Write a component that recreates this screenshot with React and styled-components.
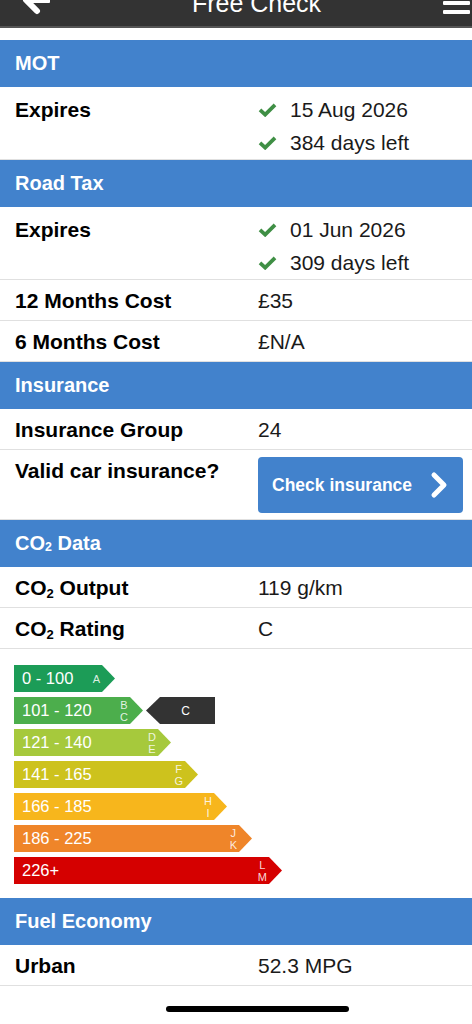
import styled, { createGlobalStyle } from "styled-components";

const GlobalStyle = createGlobalStyle`
  * { box-sizing: border-box; }
  body {
    margin: 0;
    background: #fff;
    font-family: "Liberation Sans", Arial, Helvetica, sans-serif;
    color: #111;
  }
`;

const bands = [
  { range: "0 - 100", letters: ["A"], width: 101, color: "#1c9c57" },
  { range: "101 - 120", letters: ["B", "C"], width: 129, color: "#4cae4c", active: true },
  { range: "121 - 140", letters: ["D", "E"], width: 157, color: "#a6c93c" },
  { range: "141 - 165", letters: ["F", "G"], width: 184, color: "#cdc21d" },
  { range: "166 - 185", letters: ["H", "I"], width: 213, color: "#f7b61c" },
  { range: "186 - 225", letters: ["J", "K"], width: 238, color: "#ef8529" },
  { range: "226+", letters: ["L", "M"], width: 268, color: "#d50000" },
];

const Check = () => (
  <CheckIcon viewBox="0 0 20 16" width="19" height="15">
    <polyline points="2,8.5 7.5,13.5 18,3" fill="none" stroke="#3f8f45" strokeWidth="4" />
  </CheckIcon>
);

const CO2 = () => (
  <>
    CO<Sub>2</Sub>
  </>
);

const App = () => {
  return (
    <>
      <GlobalStyle />
      <Page>
        <TopBar>
          <BackArrow viewBox="0 0 30 34" width="30" height="34">
            <path
              d="M28 17 H8 M17 6 L6 17 L17 28"
              fill="none"
              stroke="#fff"
              strokeWidth="6"
              strokeLinecap="round"
              strokeLinejoin="round"
            />
          </BackArrow>
          <Title>Free Check</Title>
          <Burger>
            <span />
            <span />
            <span />
          </Burger>
        </TopBar>

        <SectionHeader>MOT</SectionHeader>
        <Row $tall>
          <Label>Expires</Label>
          <ValueList>
            <ValueLine>
              <Check />
              15 Aug 2026
            </ValueLine>
            <ValueLine>
              <Check />
              384 days left
            </ValueLine>
          </ValueList>
        </Row>

        <SectionHeader>Road Tax</SectionHeader>
        <Row $tall>
          <Label>Expires</Label>
          <ValueList>
            <ValueLine>
              <Check />
              01 Jun 2026
            </ValueLine>
            <ValueLine>
              <Check />
              309 days left
            </ValueLine>
          </ValueList>
        </Row>
        <Row>
          <Label>12 Months Cost</Label>
          <Value>£35</Value>
        </Row>
        <Row>
          <Label>6 Months Cost</Label>
          <Value>£N/A</Value>
        </Row>

        <SectionHeader>Insurance</SectionHeader>
        <Row>
          <Label>Insurance Group</Label>
          <Value>24</Value>
        </Row>
        <ButtonRow>
          <Label>Valid car insurance?</Label>
          <InsuranceButton>
            Check insurance
            <svg viewBox="0 0 20 28" width="20" height="28">
              <polyline
                points="5,4 15,14 5,24"
                fill="none"
                stroke="#fff"
                strokeWidth="5"
                strokeLinecap="round"
                strokeLinejoin="round"
              />
            </svg>
          </InsuranceButton>
        </ButtonRow>

        <SectionHeader>
          <CO2 /> Data
        </SectionHeader>
        <Row>
          <Label>
            <CO2 /> Output
          </Label>
          <Value>119 g/km</Value>
        </Row>
        <Row>
          <Label>
            <CO2 /> Rating
          </Label>
          <Value>C</Value>
        </Row>

        <Chart>
          {bands.map((b) => (
            <BandRow key={b.range}>
              <Band $color={b.color} style={{ width: b.width }}>
                <BandRange>{b.range}</BandRange>
                <BandLetters>
                  {b.letters.map((l) => (
                    <span key={l}>{l}</span>
                  ))}
                </BandLetters>
              </Band>
              {b.active && <Pointer>C</Pointer>}
            </BandRow>
          ))}
        </Chart>

        <SectionHeader>Fuel Economy</SectionHeader>
        <Row>
          <Label>Urban</Label>
          <Value>52.3 MPG</Value>
        </Row>

        <Footer>
          <HomeIndicator />
        </Footer>
      </Page>
    </>
  );
};

export default App;

const Page = styled.div`
  width: 472px;
  min-height: 1024px;
  overflow: hidden;
`;

const TopBar = styled.header`
  display: flex;
  align-items: flex-start;
  height: 28px;
  padding: 0 2px 0 20px;
  margin-bottom: 12px;
  background: #333;
  border-bottom: 2px solid #555;
  overflow: hidden;
  color: #fff;
`;

const BackArrow = styled.svg`
  flex: none;
  margin-top: -17px;
`;

const Title = styled.div`
  flex: 1;
  margin-top: -9px;
  padding-left: 20px;
  font-size: 25px;
  line-height: 25px;
  text-align: center;
`;

const Burger = styled.div`
  flex: none;
  display: flex;
  flex-direction: column;
  gap: 5px;
  width: 27px;
  margin-top: -8px;

  span {
    display: block;
    height: 4px;
    border-radius: 1px;
    background: #fff;
  }
`;

const SectionHeader = styled.div`
  display: flex;
  align-items: center;
  height: 47px;
  padding-left: 15px;
  background: #4282cc;
  color: #fff;
  font-size: 20px;
  font-weight: 700;
  white-space: pre;
`;

const Sub = styled.span`
  font-size: 0.62em;
  position: relative;
  top: 0.3em;
  line-height: 0;
`;

const Row = styled.div`
  display: grid;
  grid-template-columns: 243px 1fr;
  align-items: ${(p) => (p.$tall ? "start" : "center")};
  min-height: ${(p) => (p.$tall ? "73px" : "41px")};
  padding: ${(p) => (p.$tall ? "6px 0 0 15px" : "0 0 0 15px")};
  border-bottom: 1px solid #e0e0e0;
`;

const Label = styled.div`
  font-size: 21px;
  font-weight: 700;
  line-height: 33px;
  color: #000;
`;

const Value = styled.div`
  font-size: 21px;
  line-height: 33px;
  color: #1a1a1a;
`;

const ValueList = styled.div`
  display: flex;
  flex-direction: column;
`;

const ValueLine = styled(Value)`
  display: flex;
  align-items: center;
  gap: 13px;
`;

const CheckIcon = styled.svg`
  flex: none;
`;

const ButtonRow = styled(Row)`
  align-items: start;
  padding: 7px 9px 6px 15px;

  ${Label} {
    line-height: 28px;
  }
`;

const InsuranceButton = styled.button`
  display: flex;
  align-items: center;
  justify-content: space-between;
  width: 205px;
  height: 56px;
  padding: 0 14px 0 14px;
  border: none;
  border-radius: 4px;
  background: #4282cc;
  color: #fff;
  font-family: inherit;
  font-size: 17.5px;
  font-weight: 700;
  cursor: pointer;
`;

const Chart = styled.div`
  display: flex;
  flex-direction: column;
  gap: 5px;
  padding: 16px 0 14px 14px;
`;

const BandRow = styled.div`
  display: flex;
  align-items: center;
  gap: 3px;
`;

const Band = styled.div`
  display: flex;
  align-items: center;
  justify-content: space-between;
  height: 27px;
  padding: 0 15px 0 8px;
  background: ${(p) => p.$color};
  clip-path: polygon(0 0, calc(100% - 13px) 0, 100% 50%, calc(100% - 13px) 100%, 0 100%);
  color: #fff;
`;

const BandRange = styled.span`
  font-size: 16.5px;
`;

const BandLetters = styled.span`
  display: flex;
  flex-direction: column;
  align-items: center;
  font-size: 11px;
  line-height: 12px;
  color: rgba(255, 255, 255, 0.85);
`;

const Pointer = styled.div`
  display: flex;
  align-items: center;
  justify-content: center;
  width: 69px;
  height: 27px;
  padding-left: 10px;
  background: #333;
  clip-path: polygon(0 50%, 14px 0, 100% 0, 100% 100%, 14px 100%);
  color: #fff;
  font-size: 12px;
`;

const Footer = styled.div`
  padding: 20px 0 0 166px;
`;

const HomeIndicator = styled.div`
  width: 183px;
  height: 6px;
  border-radius: 3px;
  background: #000;
`;
